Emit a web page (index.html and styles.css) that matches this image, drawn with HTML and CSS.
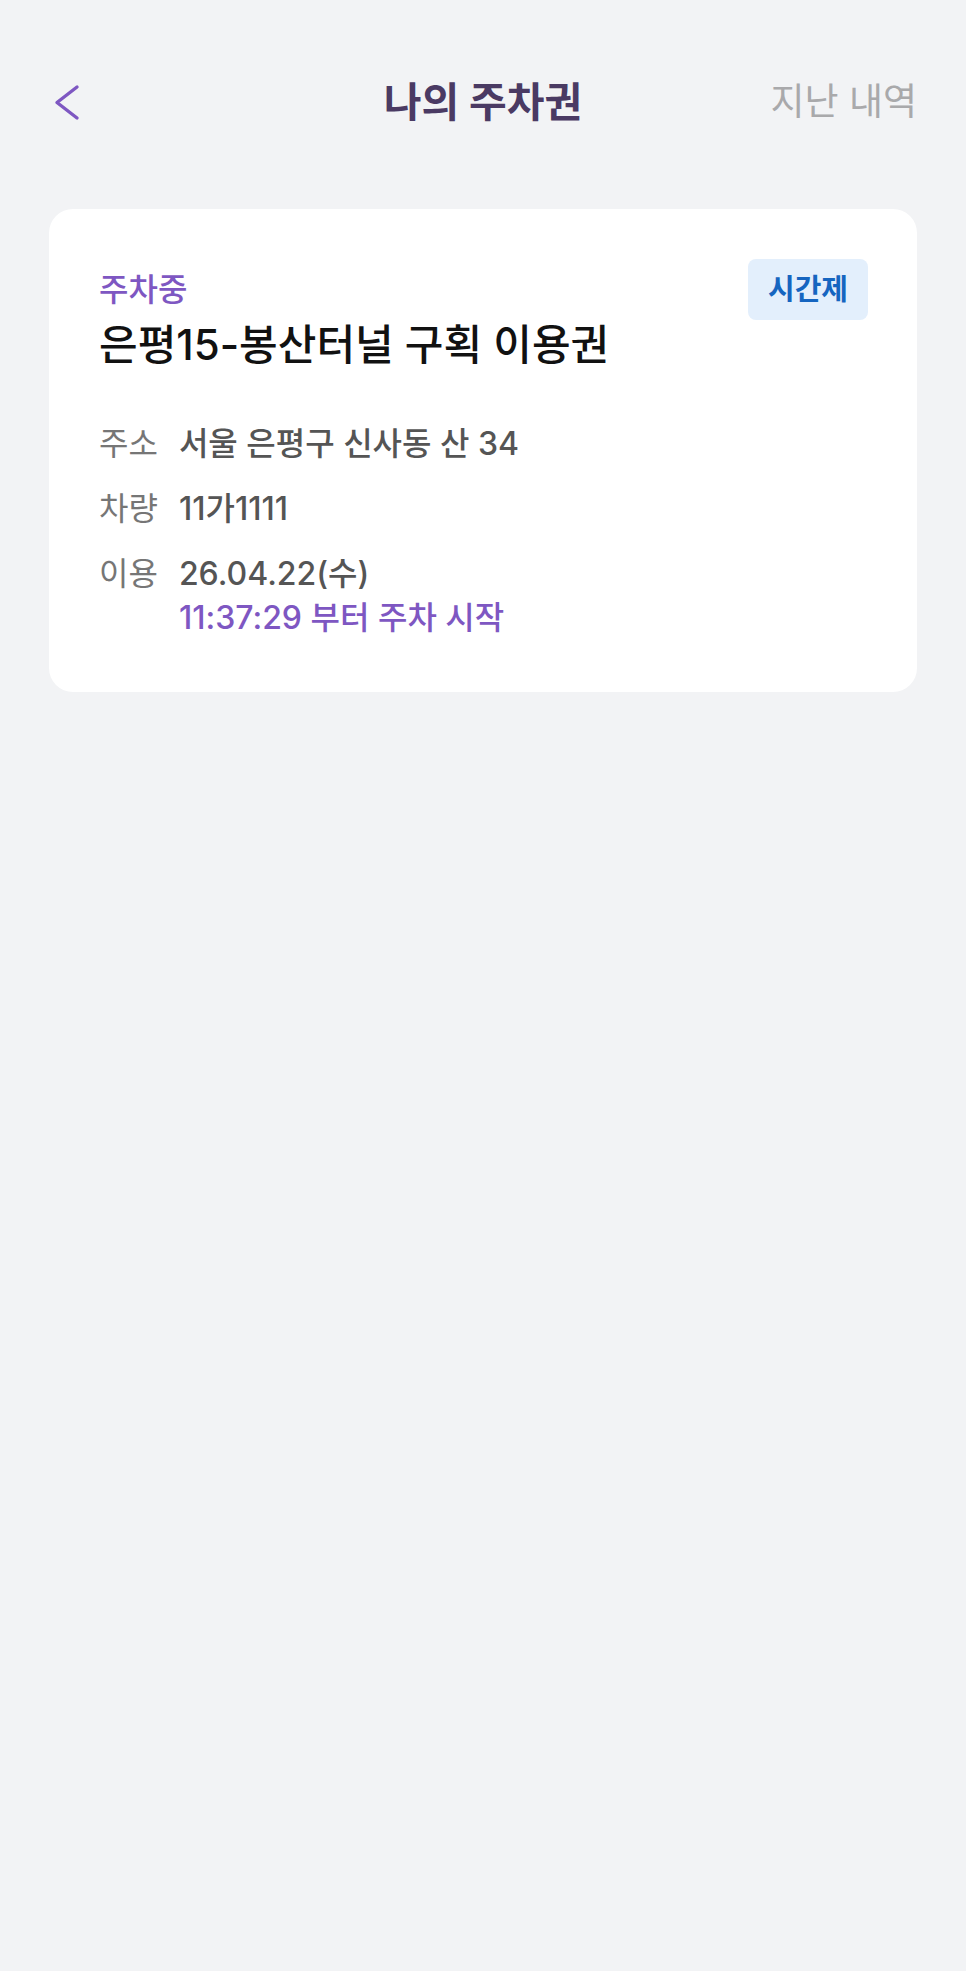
FILE: index.html
```html
<!DOCTYPE html>
<html>
<head>
  <meta charset="utf-8">
  <title>나의 주차권</title>
  <link rel="stylesheet" href="styles.css">
</head>
<body>
  <div class="page">
    <header class="top-bar">
      <a class="back-btn" href="#" aria-label="뒤로">
        <svg width="30" height="40" viewBox="0 0 30 40">
          <polyline points="25,5 5,20.5 25,36" fill="none" stroke="#7e57c2" stroke-width="3.4" stroke-linecap="round" stroke-linejoin="round"/>
        </svg>
      </a>
      <h1 class="page-title">나의 주차권</h1>
      <a class="history-link" href="#">지난 내역</a>
    </header>

    <div class="ticket-card">
      <div class="ticket-head">
        <div>
          <div class="ticket-status">주차중</div>
          <div class="ticket-name">은평15-봉산터널 구획 이용권</div>
        </div>
        <span class="ticket-badge">시간제</span>
      </div>

      <div class="ticket-info">
        <div class="info-row">
          <span class="info-label">주소</span>
          <span class="info-value">서울 은평구 신사동 산 34</span>
        </div>
        <div class="info-row">
          <span class="info-label">차량</span>
          <span class="info-value">11가1111</span>
        </div>
        <div class="info-row">
          <span class="info-label">이용</span>
          <div class="info-value">
            <div>26.04.22(수)</div>
            <div class="info-time">11:37:29 부터 주차 시작</div>
          </div>
        </div>
      </div>
    </div>
  </div>
</body>
</html>
```

FILE: styles.css
```css
body {
  margin: 0;
  background-color: #f2f3f5;
  font-family: "Inter", "Noto Sans CJK KR", sans-serif;
  min-height: 1971px;
}

.page {
  padding: 0 49px;
}

.top-bar {
  display: grid;
  grid-template-columns: 1fr auto 1fr;
  align-items: center;
  padding-top: 74px;
  height: 56px;
}

.back-btn {
  display: flex;
  align-items: center;
  padding-left: 3px;
}

.page-title {
  margin: 0;
  font-size: 41px;
  font-weight: 700;
  color: #4a3a63;
  line-height: 56px;
}

.history-link {
  justify-self: end;
  font-size: 37px;
  color: #a9a9ab;
  text-decoration: none;
  line-height: 56px;
}

.ticket-card {
  margin-top: 79px;
  background-color: #fff;
  border-radius: 24px;
  padding: 50px 49px 52px 50px;
}

.ticket-head {
  display: flex;
  justify-content: space-between;
  align-items: flex-start;
}

.ticket-status {
  font-size: 32px;
  font-weight: 500;
  color: #7e57c2;
  line-height: 44px;
  margin-top: 9px;
}

.ticket-name {
  font-size: 42px;
  font-weight: 500;
  color: #111;
  line-height: 54px;
  margin-top: 6px;
}

.ticket-badge {
  background-color: #e3effc;
  color: #1565c0;
  font-size: 29px;
  font-weight: 700;
  border-radius: 8px;
  padding: 0 20px;
  line-height: 61px;
}

.ticket-info {
  margin-top: 50px;
}

.info-row {
  display: flex;
  gap: 21px;
  margin-bottom: 21px;
  line-height: 44px;
}

.info-row:last-child {
  margin-bottom: 0;
}

.info-label {
  font-size: 32px;
  color: #767676;
}

.info-value {
  font-size: 32px;
  font-weight: 500;
  color: #555;
}

.info-time {
  color: #7e57c2;
}
```
